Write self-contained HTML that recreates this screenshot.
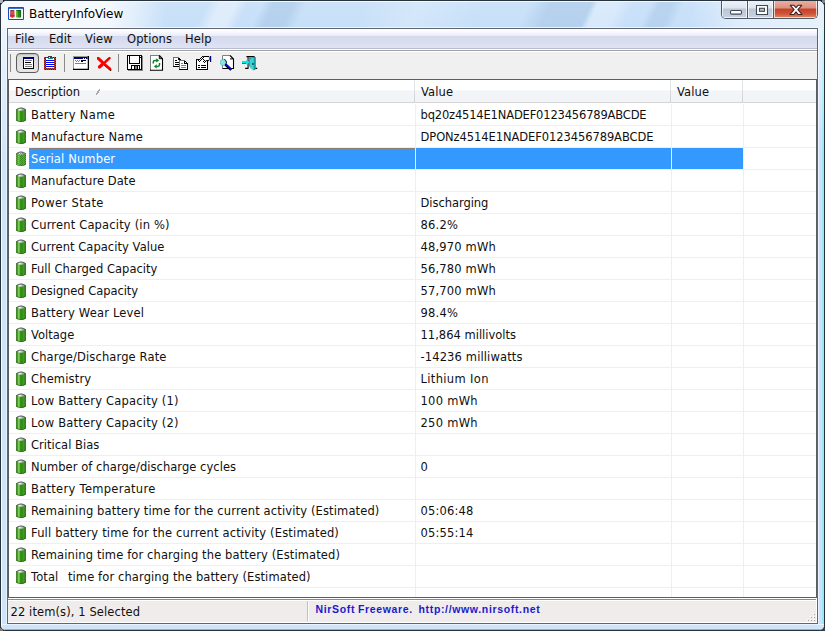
<!DOCTYPE html>
<html lang="en"><head><meta charset="utf-8"><title>BatteryInfoView</title>
<style>
html,body{margin:0;padding:0}
body{width:825px;height:631px;overflow:hidden;position:relative;background:#1b242b;font-family:"DejaVu Sans","Liberation Sans",sans-serif;font-size:11.5px;letter-spacing:0.1px;color:#101010;-webkit-font-smoothing:antialiased}
div,span{box-sizing:border-box}
.win{position:absolute;left:0;top:0;width:825px;height:631px;border:1px solid #27323a;border-radius:7px 7px 6px 6px;background:#cfe3fa;overflow:hidden}
.win .tb{position:absolute;left:0;top:0;width:823px;height:28px;background:
 linear-gradient(90deg,rgba(255,255,255,.82) 0,rgba(255,255,255,.8) 105px,rgba(255,255,255,.45) 135px,rgba(255,255,255,0) 165px),
 linear-gradient(115deg,rgba(255,255,255,0) 188px,rgba(255,255,255,.4) 200px,rgba(255,255,255,.4) 214px,rgba(255,255,255,0) 224px,rgba(110,150,195,0) 238px,rgba(110,150,195,.2) 248px,rgba(110,150,195,.2) 266px,rgba(110,150,195,0) 278px,rgba(255,255,255,0) 330px,rgba(255,255,255,.22) 380px,rgba(255,255,255,0) 440px,rgba(110,150,195,0) 480px,rgba(110,150,195,.2) 500px,rgba(110,150,195,.2) 536px,rgba(255,255,255,.3) 542px,rgba(255,255,255,.3) 560px,rgba(255,255,255,0) 575px,rgba(110,150,195,0) 590px,rgba(110,150,195,.18) 598px,rgba(110,150,195,.18) 610px,rgba(110,150,195,0) 620px),
 linear-gradient(90deg,rgba(255,255,255,0) 690px,rgba(255,255,255,.45) 740px,rgba(255,255,255,.55) 823px),
 linear-gradient(#cbe2f9,#c6dff8)}
.win .fl{position:absolute;left:0;top:27px;width:6px;height:602px;background:linear-gradient(90deg,#eafcff 0,#eafcff 1px,#cfe3fa 1px,#cfe3fa 5px,#e6f4ff 5px)}
.win .fr{position:absolute;left:817px;top:27px;width:6px;height:602px;background:linear-gradient(90deg,#e8f4ff 0,#e8f4ff 1px,#cde1f9 1px,#cde1f9 4px,#9ae4fc 4px)}
.win .fl::after,.win .fr::after{content:"";position:absolute;left:0;top:0;width:6px;height:130px;background:linear-gradient(rgba(255,255,255,.6),rgba(255,255,255,0))}
.win .fb{position:absolute;left:0;top:623px;width:823px;height:6px;background:linear-gradient(180deg,#e6f4ff 0,#e6f4ff 1px,#cfe3fa 1px,#cfe3fa 5px,#46d0ff 5px)}
.win .hl{position:absolute;left:0;top:0;width:823px;height:629px;border-radius:6px 6px 5px 5px;box-shadow:inset 1px 1px 0 0 rgba(240,252,255,.95);pointer-events:none}
.title{position:absolute;left:28px;top:4px;height:18px;line-height:18px;font-size:12px;letter-spacing:-0.1px;white-space:pre;color:#000;text-shadow:0 0 6px #fff,0 0 3px #fff}
.appico{position:absolute;left:7px;top:6px}
.cap{position:absolute;left:720px;top:-1px;width:97px;height:19px;border:1px solid #4d5a66;border-top:none;border-radius:0 0 5px 5px;overflow:hidden;background:#c9d5e3}
.cap .b{position:absolute;top:0;height:18px;box-shadow:inset 0 0 0 1px rgba(255,255,255,.7)}
.cap .bmin{left:0;width:25px;background:linear-gradient(#eef3f9 0,#dde6f0 45%,#b9c6d6 50%,#c8d4e3 100%)}
.cap .bmax{left:26px;width:25px;background:linear-gradient(#eef3f9 0,#dde6f0 45%,#b9c6d6 50%,#c8d4e3 100%)}
.cap .bcls{left:52px;width:43px;background:linear-gradient(#eab3a6 0,#dd8f7e 45%,#c6402a 50%,#cf5236 75%,#de8a68 100%)}
.cap .sep{position:absolute;top:0;width:1px;height:18px;background:#4d5a66}
.client{position:absolute;left:6px;top:27px;width:811px;height:596px;border:1px solid #5f6670;background:#f0f0f0;box-shadow:0 -1px 0 rgba(240,250,255,.85)}
.menu{position:absolute;left:0;top:0;width:809px;height:20px;background:linear-gradient(#fff 0,#fcfcfe 2px,#e8ebf8 7px,#d3d8ec 7px,#dee3f4 19px);border-bottom:1px solid #b6bdd0}
.menu span{position:absolute;top:2px;height:16px;line-height:16px;white-space:pre}
.tbar{position:absolute;left:0;top:20px;width:809px;height:30px;background:linear-gradient(#a2a2a2 0,#a2a2a2 1px,#fff 1px,#fff 2px,#f0f0f0 2px);border-top:1px solid #fff}
.tsep{position:absolute;top:4px;width:1px;height:18px;background:#8a8a8a}
.tbtn{position:absolute;left:8px;top:3px;width:23px;height:20px;border:1px solid #5c5c5c;border-radius:4px;background:linear-gradient(#d9d9d9,#e6e6e6);box-shadow:inset 0 1px 1px rgba(0,0,0,.12)}
.ti{position:absolute}
.lv{position:absolute;left:0;top:50px;width:809px;height:519px;border:1px solid #5b5e63;background:#fff;overflow:hidden}
.lvh{position:absolute;left:0;top:0;width:807px;height:23px;background:linear-gradient(#ffffff 0,#ffffff 45%,#f3f4f8 50%,#f3f4f8 100%);border-bottom:1px solid #d5d5d5}
.hc{position:absolute;top:0;height:22px;line-height:25px;padding-left:6px;white-space:pre;overflow:hidden}
.hs{position:absolute;top:0;width:1px;height:22px;background:linear-gradient(#e9eaee,#cfd0d6)}
.sortmark{position:absolute;left:87px;top:9px;width:4px;height:6px;background:linear-gradient(123deg,transparent 36%,#a8a8a8 36%,#a8a8a8 64%,transparent 64%)}
.vg{position:absolute;top:24px;width:1px;height:494px;background:#efefef}
.row{position:absolute;left:0;width:807px;height:22px;border-bottom:1px solid #efefef;line-height:21px;white-space:pre}
.bi{position:absolute;left:7px;top:3px}
.c1{position:absolute;left:22px;top:1px;height:21px}
.c2{position:absolute;left:411.5px;top:1px;height:21px}
.row.sel .c1{left:20px;top:0;width:386px;padding-left:1px;background:#3399ff;color:#fff;border-left:1px dotted #d68a40;border-top:1px dotted #8a7a70;line-height:21px}
.row.sel::before{content:"";position:absolute;left:407px;top:0;width:255px;height:21px;background:#3399ff}
.row.sel::after{content:"";position:absolute;left:663px;top:0;width:71px;height:21px;background:#3399ff}
.sb{position:absolute;left:0;top:569px;width:809px;height:25px;background:linear-gradient(#fff 0,#fff 1px,#8c8c8c 1px,#8c8c8c 2px,#fff 2px,#fff 3px,#f0ecec 3px);border-top:none;border-bottom:1px solid #fff;border-right:1px solid #fff}
.sb .t1{position:absolute;left:2.5px;top:4px;height:20px;line-height:20px;white-space:pre}
.sb .psep{position:absolute;left:299px;top:3px;width:2px;height:20px;background:#c4c0c0;border-right:1px solid #fbfbfb}
.sb .t2{position:absolute;left:307.5px;word-spacing:-.7px;top:2px;height:18px;line-height:18px;font-family:"Liberation Sans",sans-serif;font-weight:bold;font-size:10.5px;letter-spacing:.65px;color:#1a1acd;white-space:pre}
.grip{position:absolute;left:798px;top:14px}
.cn{position:absolute;width:3px;height:3px}

</style></head>
<body>
<svg width="0" height="0" style="position:absolute">
<defs>
<linearGradient id="bg" x1="0" x2="1" y1="0" y2="0"><stop offset="0" stop-color="#286a0f"/><stop offset=".12" stop-color="#3f8f20"/><stop offset=".28" stop-color="#8ede6a"/><stop offset=".42" stop-color="#3a9418"/><stop offset=".6" stop-color="#2f8a14"/><stop offset=".8" stop-color="#46a028"/><stop offset=".93" stop-color="#2c7412"/><stop offset="1" stop-color="#1f5a0c"/></linearGradient>
<linearGradient id="bc" x1="0" x2="1" y1="0" y2="0"><stop offset="0" stop-color="#6a6e72"/><stop offset=".35" stop-color="#f4f6f8"/><stop offset=".7" stop-color="#a8acb2"/><stop offset="1" stop-color="#5a5e64"/></linearGradient>
<linearGradient id="bgs" x1="0" x2="1" y1="0" y2="0"><stop offset="0" stop-color="#2a7a8c"/><stop offset=".3" stop-color="#4fb0b8"/><stop offset=".6" stop-color="#2f9a96"/><stop offset="1" stop-color="#2880a8"/></linearGradient>
<pattern id="chk" width="2" height="2" patternUnits="userSpaceOnUse"><rect width="1" height="1" fill="#3399ff"/><rect x="1" y="1" width="1" height="1" fill="#3399ff"/></pattern>
<pattern id="chkb" width="2" height="2" patternUnits="userSpaceOnUse"><rect width="2" height="2" fill="#fff"/><rect width="1" height="1" fill="#000"/><rect x="1" y="1" width="1" height="1" fill="#000"/></pattern>
<g id="bat"><path d="M.1 2.500Q5 -.7 9.900 2.500V13.500Q5 16.700 .1 13.500Z" fill="url(#bg)"/><path d="M.1 12.600Q5 15.700 9.900 12.600V13.500Q5 16.700 .1 13.500Z" fill="#184a0a" opacity=".5"/><path d="M.5 2.400Q5 -.6 9.500 2.400V2.800Q5 4.500 .5 2.800Z" fill="url(#bc)"/><path d="M.3 2.700Q5 -.8 9.700 2.700" fill="none" stroke="#454b50" stroke-width=".9"/></g>
<g id="bats"><use href="#bat"/><path d="M.1 2.500Q5 -.7 9.900 2.500V13.500Q5 16.700 .1 13.500Z" fill="url(#chk)"/></g>
</defs>
</svg>
<div class="cn" style="left:0;top:0;background:#aeb3bf"></div><div class="cn" style="left:822px;top:0;background:#7e828e"></div><div class="cn" style="left:0;top:628px;background:#857c76"></div><div class="cn" style="left:822px;top:628px;background:#3a3f44"></div>
<div class="win">
<div class="tb"></div><div class="fl"></div><div class="fr"></div><div class="fb"></div><div class="hl"></div>
<svg class="appico" width="16" height="13" viewBox="0 0 16 13"><defs><linearGradient id="ag" x1="0" x2="1" y1="0" y2="0"><stop offset="0" stop-color="#6cc040"/><stop offset=".35" stop-color="#58b030"/><stop offset=".55" stop-color="#2f8a1c"/><stop offset="1" stop-color="#1a640e"/></linearGradient></defs><rect x="0" y="0" width="16" height="13" rx="1" fill="#0e4cc0"/><rect x="1" y="1.800" width="14" height="10.200" fill="#f4f7fb"/><rect x="2.100" y="3.100" width="4.400" height="7.200" rx=".6" fill="#c4525e"/><rect x="2.100" y="7.800" width="4.400" height="1.700" fill="#f01a1a"/><rect x="2.700" y="3" width="3.200" height=".9" fill="#8a3848"/><rect x="3.600" y="10.200" width="1.200" height=".8" fill="#9a3030"/><rect x="8" y="3.100" width="5.100" height="7.300" rx=".6" fill="url(#ag)"/><rect x="8.600" y="3" width="4" height=".9" fill="#2a4a20"/><rect x="10" y="3.600" width=".8" height="6.800" fill="#246e14" opacity=".6"/></svg>
<div class="title">BatteryInfoView</div>
<div class="cap"><div class="b bmin"></div><div class="b bmax"></div><div class="b bcls"></div><div class="sep" style="left:25px"></div><div class="sep" style="left:51px"></div>
<svg style="position:absolute;left:0;top:0" width="95" height="18" viewBox="0 0 95 18"><rect x="8.500" y="10.500" width="11" height="3.600" rx="1.200" fill="#fff" stroke="#3f4853" stroke-width="1.100"/><path d="M34.500 5.500h11v9h-11z" fill="#fff" stroke="#3f4853" stroke-width="1.100"/><rect x="37.500" y="8.300" width="5" height="3" fill="#b9c5d4" stroke="#3f4853" stroke-width="1.100"/><path d="M68.300 5.300h3.700l2 2.300 2-2.300h3.700l-3.800 4.400 4.100 4.800h-3.900l-2.100-2.600-2.100 2.600h-3.900l4.100-4.800z" fill="#fff" stroke="#43221f" stroke-width="1.100" stroke-linejoin="round"/></svg></div>
<div class="client">
<div class="menu"><span style="left:7px">File</span><span style="left:41px">Edit</span><span style="left:77px">View</span><span style="left:119px">Options</span><span style="left:177px">Help</span></div>
<div class="tbar">
<div class="tsep" style="left:2px"></div><div class="tbtn"></div><div class="tsep" style="left:56px"></div><div class="tsep" style="left:110px"></div>
<svg class="ti" style="left:15px;top:7px" width="11" height="12" viewBox="0 0 11 12" shape-rendering="crispEdges"><rect width="11" height="12" fill="#000"/><rect x="1" y="0" width="9" height="2" fill="#000080"/><rect x="1" y="2" width="9" height="9" fill="#fff"/><rect x="2" y="3" width="7" height="1" fill="#808080"/><rect x="2" y="5" width="6" height="1" fill="#000"/><rect x="2" y="7" width="7" height="1" fill="#808080"/><rect x="2" y="9" width="7" height="1" fill="#808080"/></svg>
<svg class="ti" style="left:36px;top:6px" width="12" height="14" viewBox="0 0 12 14" shape-rendering="crispEdges"><defs><pattern id="dth" width="2" height="2" patternUnits="userSpaceOnUse"><rect width="2" height="2" fill="#6f6a16"/><rect width="1" height="1" fill="#8c1c10"/><rect x="1" y="1" width="1" height="1" fill="#5a1408"/></pattern></defs><rect x="0" y="1" width="12" height="13" fill="url(#dth)"/><rect x="2" y="2" width="8" height="10" fill="#fff"/><rect x="4" y="0" width="4" height="2" fill="#4c3640"/><rect x="5" y="1" width="1" height="1" fill="#f0f0f0"/><rect x="4" y="2" width="5" height="1" fill="#148484"/><rect x="2" y="4" width="8" height="1" fill="#0000f0"/><rect x="2" y="6" width="8" height="1" fill="#0000f0"/><rect x="2" y="8" width="8" height="1" fill="#0000f0"/><rect x="2" y="10" width="8" height="1" fill="#0000f0"/></svg>
<svg class="ti" style="left:65px;top:6px" width="16" height="14" viewBox="0 0 16 14" shape-rendering="crispEdges"><rect width="16" height="14" fill="#000"/><rect x="0" y="0" width="14.600" height="12.600" fill="#989e8c" shape-rendering="auto"/><rect x="1" y="1" width="13.600" height="11.600" fill="#fff" shape-rendering="auto"/><rect x="1" y="1" width="13.600" height="2" fill="#000080" shape-rendering="auto"/><rect x="10" y="2" width="1" height="1" fill="#fff"/><rect x="12" y="2" width="1" height="1" fill="#fff"/><g fill="#808080"><rect x="2" y="4" width="1" height="1"/><rect x="3" y="5" width="1" height="1"/><rect x="4" y="4" width="1" height="1"/><rect x="5" y="5" width="1" height="1"/><rect x="6" y="4" width="1" height="1"/><rect x="2" y="7" width="11" height="1"/></g><rect x="8" y="4" width="5" height="1" fill="#000"/><rect x="8" y="5" width="2" height="1" fill="#000"/></svg>
<svg class="ti" style="left:89px;top:7px" width="15" height="14" viewBox="0 0 15 14"><path d="M7.800 8.200L13.600 13" stroke="#200" stroke-width="1.700" stroke-linecap="round"/><path d="M1.300 1.500L7 6.600L13 11.700" stroke="#f00" stroke-width="2.300" stroke-linecap="round" fill="none"/><path d="M1 1.200L5 4.800" stroke="#f00" stroke-width="2.900" stroke-linecap="round"/><path d="M12.400 1.200L8 5.200L2.600 9.800" stroke="#f00" stroke-width="2.500" stroke-linecap="round" fill="none"/><path d="M5 7.800L2.500 9.900" stroke="#f00" stroke-width="3.300" stroke-linecap="round"/><path d="M12.700 .9L10.500 2.900" stroke="#c00" stroke-width="1.200" stroke-linecap="round"/></svg>
<svg class="ti" style="left:119px;top:5px" width="16" height="16" viewBox="0 0 16 16" shape-rendering="crispEdges"><rect x="1" y="1" width="15" height="15" fill="#8a8a8a"/><rect width="15" height="15" fill="#000"/><rect x="1" y="1" width="13" height="13" fill="#fff"/><rect x="2" y="1" width="1" height="8" fill="#000"/><rect x="12" y="1" width="1" height="8" fill="#000"/><rect x="2" y="8" width="11" height="1" fill="#000"/><rect x="13" y="2" width="1" height="1" fill="#000"/><rect x="4" y="10" width="9" height="4" fill="#000"/><rect x="5" y="11" width="2" height="3" fill="#fff"/><rect x="8" y="11" width="2" height="3" fill="#808080"/><rect x="11" y="11" width="1" height="3" fill="#fff"/></svg>
<svg class="ti" style="left:142px;top:5px" width="14" height="17" viewBox="0 0 14 17"><path d="M.5 .5h9l3 3.200v11.800h-12z" fill="#fff" stroke="none"/><path d="M.5 15.500v-15h9" fill="none" stroke="#808080" shape-rendering="crispEdges"/><path d="M9.300 .5l3.200 3.300v11.500h-12.500" fill="none" stroke="#000" stroke-width="1.100"/><path d="M9.300 .8v2.900h3" fill="none" stroke="#000" stroke-width="1"/><path d="M3.300 8.600V6.800Q3.400 5.500 5 5.500H6.400" fill="none" stroke="#0a7a5a" stroke-width="1.500"/><path d="M6.200 3.200L9.100 5.400L6.200 7.500Z" fill="#008000"/><path d="M9.500 8.100V9.800Q9.400 11.400 7.800 11.450H6.500" fill="none" stroke="#0a7a5a" stroke-width="1.500"/><path d="M6.700 9.300L3.900 11.450L6.700 13.600Z" fill="#008000"/></svg>
<svg class="ti" style="left:165px;top:7px" width="16" height="14" viewBox="0 0 16 14" shape-rendering="crispEdges"><path d="M.5 .5h5l2 2v7h-7z" fill="#fff" stroke="#000"/><path d="M.5 8.500v-8h5" fill="none" stroke="#707070"/><path d="M5.500 .5v2h2" fill="none" stroke="#000"/><rect x="0" y="9" width="8" height="1" fill="#000"/><rect x="2" y="3" width="2" height="1" fill="#000"/><rect x="2" y="5" width="4" height="1" fill="#000"/><rect x="2" y="7" width="4" height="1" fill="#000"/><path d="M6.500 3.500h5l3 3v6h-8z" fill="#fff" stroke="#000"/><path d="M6.500 11.500v-8h5" fill="none" stroke="#707070"/><path d="M11.500 3.500v3h3" fill="none" stroke="#000"/><rect x="6" y="12" width="9" height="1" fill="#000"/><rect x="8" y="6" width="2" height="1" fill="#808080"/><rect x="8" y="8" width="5" height="1" fill="#808080"/><rect x="8" y="10" width="5" height="1" fill="#808080"/></svg>
<svg class="ti" style="left:188px;top:6px" width="16" height="15" viewBox="0 0 16 15"><g shape-rendering="crispEdges"><rect x=".5" y="3.500" width="11" height="10" fill="#fff" stroke="#000"/><rect x="0" y="13" width="12" height="1.300" fill="#000"/><rect x="2" y="9" width="2" height="1" fill="#000"/><rect x="5" y="9" width="5" height="1" fill="#000"/><rect x="2" y="11" width="2" height="1" fill="#000"/><rect x="5" y="11" width="5" height="1" fill="#000"/></g><path d="M6.400 1.200L8 .3H13.300V4.800H10.600L8.700 7.200Z" fill="#fff"/><path d="M2.400 5.900L6.300 1.700L9.400 7" fill="none" stroke="url(#chkb)" stroke-width="2.400" shape-rendering="crispEdges"/><path d="M7.200 .5H13.200" stroke="#000" stroke-width="1"/><path d="M9.800 4.600H13.200" stroke="#000" stroke-width="1"/><path d="M13.200 1.200L13.700 2.200 13.200 3.900" fill="none" stroke="#000" stroke-width=".8"/><rect x="14" y="0" width="1.200" height="6" fill="#00007a"/></svg>
<svg class="ti" style="left:212px;top:5px" width="15" height="17" viewBox="0 0 15 17"><path d="M2.500 .5h7.500l3.500 3.500v9.500h-11z" fill="#fff"/><path d="M2.500 13.500v-13h7.500" fill="none" stroke="#808080" stroke-width="1"/><path d="M10 .5l3.500 3.500v9.500h-11" fill="none" stroke="#000" stroke-width="1.100"/><path d="M10 3.900h3.400" fill="none" stroke="#000" stroke-width="1"/><path d="M5.600 9.800L11.200 14.900" stroke="#000" stroke-width="2.600"/><path d="M5.700 9.300L11.400 14.400" stroke="#0808c8" stroke-width="1.800"/><circle cx="3.300" cy="7.400" r="3" fill="#86e6e6"/><path d="M4.200 4.400A3.100 3.100 0 0 1 4.600 10.200" fill="none" stroke="#000" stroke-width="1"/><path d="M4.200 4.500A3.100 3.100 0 1 0 4.600 10.200" fill="none" stroke="#4ab0b8" stroke-width=".7"/></svg>
<svg class="ti" style="left:234px;top:6px" width="16" height="16" viewBox="0 0 16 16"><path d="M4.400 .6H12.600M6.100 .6V12.400M3.100 12.400H6.500M12.400 12.400H15.200" stroke="#000" stroke-width="1.100" fill="none"/><rect x="6.600" y="1.200" width="2.400" height="9.400" fill="#7a8a8a"/><path d="M8.100 2.900L11.400 1V14.500L8.100 12Z" fill="#38d6d8"/><path d="M11.400 1L13.800 1.600V13.300L11.400 14.500Z" fill="#18969c"/><path d="M8.100 2.900L11.400 1L13.800 1.600" fill="none" stroke="#0a6a70" stroke-width=".5"/><rect x="10.300" y="7" width="1.100" height="1.900" fill="#022"/><path d="M0 7.300H4.200V8.100H0Z" fill="#000"/><path d="M0 5.100H4.400V3.500L7.400 6.150L4.400 8.800V7.200H0Z" fill="#00eaea"/></svg>
</div>
<div class="lv">
<div class="lvh"><span class="hc" style="left:0;width:405px;letter-spacing:-0.04px">Description</span><span class="sortmark"></span><span class="hs" style="left:405px"></span><span class="hc" style="left:406px;width:255px">Value</span><span class="hs" style="left:661px"></span><span class="hc" style="left:662px;width:71px">Value</span><span class="hs" style="left:733px"></span></div>
<div class="vg" style="left:406px"></div><div class="vg" style="left:662px"></div><div class="vg" style="left:734px"></div>
<div class="row" style="top:24px"><svg class="bi" width="10" height="16" viewBox="0 0 10 16"><use href="#bat"/></svg><span class="c1" style="letter-spacing:0.33px">Battery Name</span><span class="c2" style="letter-spacing:-0.17px">bq20z4514E1NADEF0123456789ABCDE</span></div>
<div class="row" style="top:46px"><svg class="bi" width="10" height="16" viewBox="0 0 10 16"><use href="#bat"/></svg><span class="c1" style="letter-spacing:0.13px">Manufacture Name</span><span class="c2" style="letter-spacing:-0.08px">DPONz4514E1NADEF0123456789ABCDE</span></div>
<div class="row sel" style="top:68px"><svg class="bi" width="10" height="16" viewBox="0 0 10 16"><use href="#bats"/></svg><span class="c1" style="letter-spacing:0.14px">Serial Number</span></div>
<div class="row" style="top:90px"><svg class="bi" width="10" height="16" viewBox="0 0 10 16"><use href="#bat"/></svg><span class="c1" style="letter-spacing:0.07px">Manufacture Date</span></div>
<div class="row" style="top:112px"><svg class="bi" width="10" height="16" viewBox="0 0 10 16"><use href="#bat"/></svg><span class="c1" style="letter-spacing:0.35px">Power State</span><span class="c2" style="letter-spacing:-0.05px">Discharging</span></div>
<div class="row" style="top:134px"><svg class="bi" width="10" height="16" viewBox="0 0 10 16"><use href="#bat"/></svg><span class="c1" style="letter-spacing:0.17px">Current Capacity (in %)</span><span class="c2" style="letter-spacing:0.23px">86.2%</span></div>
<div class="row" style="top:156px"><svg class="bi" width="10" height="16" viewBox="0 0 10 16"><use href="#bat"/></svg><span class="c1" style="letter-spacing:0.05px">Current Capacity Value</span><span class="c2" style="letter-spacing:0.16px">48,970 mWh</span></div>
<div class="row" style="top:178px"><svg class="bi" width="10" height="16" viewBox="0 0 10 16"><use href="#bat"/></svg><span class="c1" style="letter-spacing:0.03px">Full Charged Capacity</span><span class="c2" style="letter-spacing:0.16px">56,780 mWh</span></div>
<div class="row" style="top:200px"><svg class="bi" width="10" height="16" viewBox="0 0 10 16"><use href="#bat"/></svg><span class="c1" style="letter-spacing:-0.06px">Designed Capacity</span><span class="c2" style="letter-spacing:0.16px">57,700 mWh</span></div>
<div class="row" style="top:222px"><svg class="bi" width="10" height="16" viewBox="0 0 10 16"><use href="#bat"/></svg><span class="c1" style="letter-spacing:0.19px">Battery Wear Level</span><span class="c2" style="letter-spacing:0.23px">98.4%</span></div>
<div class="row" style="top:244px"><svg class="bi" width="10" height="16" viewBox="0 0 10 16"><use href="#bat"/></svg><span class="c1" style="letter-spacing:0.02px">Voltage</span><span class="c2" style="letter-spacing:0.01px">11,864 millivolts</span></div>
<div class="row" style="top:266px"><svg class="bi" width="10" height="16" viewBox="0 0 10 16"><use href="#bat"/></svg><span class="c1" style="letter-spacing:0.13px">Charge/Discharge Rate</span><span class="c2" style="letter-spacing:0.13px">-14236 milliwatts</span></div>
<div class="row" style="top:288px"><svg class="bi" width="10" height="16" viewBox="0 0 10 16"><use href="#bat"/></svg><span class="c1" style="letter-spacing:0.16px">Chemistry</span><span class="c2" style="letter-spacing:0.35px">Lithium Ion</span></div>
<div class="row" style="top:310px"><svg class="bi" width="10" height="16" viewBox="0 0 10 16"><use href="#bat"/></svg><span class="c1" style="letter-spacing:0.21px">Low Battery Capacity (1)</span><span class="c2" style="letter-spacing:0.27px">100 mWh</span></div>
<div class="row" style="top:332px"><svg class="bi" width="10" height="16" viewBox="0 0 10 16"><use href="#bat"/></svg><span class="c1" style="letter-spacing:0.21px">Low Battery Capacity (2)</span><span class="c2" style="letter-spacing:0.27px">250 mWh</span></div>
<div class="row" style="top:354px"><svg class="bi" width="10" height="16" viewBox="0 0 10 16"><use href="#bat"/></svg><span class="c1" style="letter-spacing:0.02px">Critical Bias</span></div>
<div class="row" style="top:376px"><svg class="bi" width="10" height="16" viewBox="0 0 10 16"><use href="#bat"/></svg><span class="c1" style="letter-spacing:0.05px">Number of charge/discharge cycles</span><span class="c2">0</span></div>
<div class="row" style="top:398px"><svg class="bi" width="10" height="16" viewBox="0 0 10 16"><use href="#bat"/></svg><span class="c1" style="letter-spacing:0.29px">Battery Temperature</span></div>
<div class="row" style="top:420px"><svg class="bi" width="10" height="16" viewBox="0 0 10 16"><use href="#bat"/></svg><span class="c1" style="letter-spacing:0.14px">Remaining battery time for the current activity (Estimated)</span><span class="c2" style="letter-spacing:0.17px">05:06:48</span></div>
<div class="row" style="top:442px"><svg class="bi" width="10" height="16" viewBox="0 0 10 16"><use href="#bat"/></svg><span class="c1" style="letter-spacing:0.17px">Full battery time for the current activity (Estimated)</span><span class="c2" style="letter-spacing:0.17px">05:55:14</span></div>
<div class="row" style="top:464px"><svg class="bi" width="10" height="16" viewBox="0 0 10 16"><use href="#bat"/></svg><span class="c1" style="letter-spacing:0.12px">Remaining time for charging the battery (Estimated)</span></div>
<div class="row" style="top:486px"><svg class="bi" width="10" height="16" viewBox="0 0 10 16"><use href="#bat"/></svg><span class="c1" style="letter-spacing:0.11px">Total<span style="letter-spacing:1.1px">  </span>time for charging the battery (Estimated)</span></div>
</div>
<div class="sb"><span class="t1">22 item(s), 1 Selected</span><span class="psep"></span><span class="t2">NirSoft Freeware.  http://www.nirsoft.net</span>
<svg class="grip" width="10" height="10" viewBox="0 0 10 10" shape-rendering="crispEdges"><g fill="#fff"><rect x="7" y="1" width="1" height="1"/><rect x="4" y="4" width="1" height="1"/><rect x="7" y="4" width="1" height="1"/><rect x="1" y="7" width="1" height="1"/><rect x="4" y="7" width="1" height="1"/><rect x="7" y="7" width="1" height="1"/></g><g fill="#a29e9e"><rect x="8" y="2" width="1" height="1"/><rect x="5" y="5" width="1" height="1"/><rect x="8" y="5" width="1" height="1"/><rect x="2" y="8" width="1" height="1"/><rect x="5" y="8" width="1" height="1"/><rect x="8" y="8" width="1" height="1"/></g></svg></div>
</div>
</div>
</body></html>
